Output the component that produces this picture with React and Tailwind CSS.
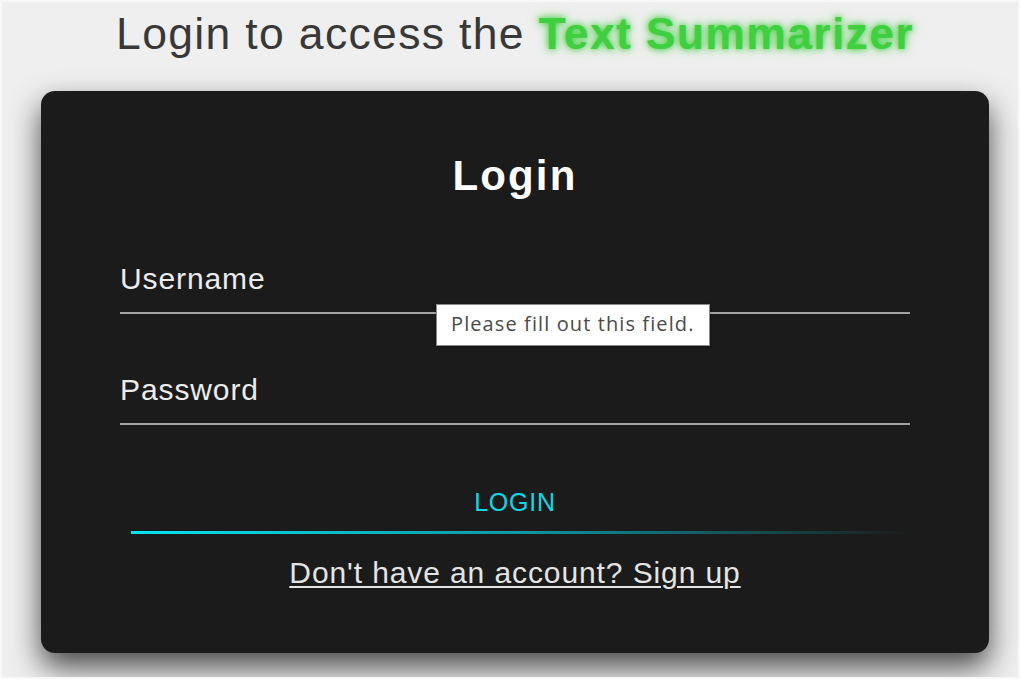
import React from 'react';

const sans = "font-['Liberation_Sans',Arial,sans-serif]";

const Field = ({ label, children }) => (
  <div className="relative border-b-2 border-[#a3a3a3] pb-[18px]">
    <p className="text-[30px] leading-none tracking-[0.03em] text-[#ececec]">{label}</p>
    {children}
  </div>
);

export default function App() {
  return (
    <div className={`${sans} h-[679px] w-full overflow-hidden border-2 border-[#f8f8f8] bg-[#efefef] pl-[10px]`}>
      <div className="flex flex-col items-center">
        {/* Heading */}
        <h1 className="mt-[10px] text-[44.5px] leading-none tracking-[0.03em] text-[#383838] whitespace-nowrap">
          Login to access the{' '}
          <span className="font-bold text-[#3fcf3f] [text-shadow:0_0_6px_#3fcf3f,0_0_12px_rgba(63,207,63,0.6)]">
            Text Summarizer
          </span>
        </h1>

        {/* Card */}
        <div className="mt-[34px] w-[948px] rounded-[14px] bg-[#1b1b1b] px-[79px] pt-[64px] pb-[63px] shadow-[0_14px_30px_rgba(0,0,0,0.7)]">
          <h2 className="text-center text-[42px] font-bold leading-none tracking-[0.05em] text-white">Login</h2>

          <div className="mt-[67px]">
            <Field label="Username">
              <div className="absolute left-[316px] top-[40px] z-10 border border-[#8a8a8a] bg-white px-[14px] py-[7px] shadow-[0_1px_3px_rgba(0,0,0,0.3)]">
                <span className="font-['Open_Sans',sans-serif] text-[20px] leading-[24px] tracking-[0.055em] text-[#4a4a4a] whitespace-nowrap">
                  Please fill out this field.
                </span>
              </div>
            </Field>
          </div>

          <div className="mt-[61px]">
            <Field label="Password" />
          </div>

          {/* Login button with glowing underline */}
          <div className="mt-[65px]">
            <p className="text-center text-[25px] leading-none tracking-[0.03em] text-[#10d6e6]">LOGIN</p>
            <div className="mt-[16px] ml-[11px] h-[3px] bg-gradient-to-r from-[#00e4f4] via-[#0b98a4] to-transparent" />
          </div>

          <p className="mt-[24px] text-center">
            <a className="text-[30px] leading-none tracking-[0.03em] text-[#e4e4e4] underline underline-offset-[3px] decoration-2">
              Don't have an account? Sign up
            </a>
          </p>
        </div>
      </div>
    </div>
  );
}
